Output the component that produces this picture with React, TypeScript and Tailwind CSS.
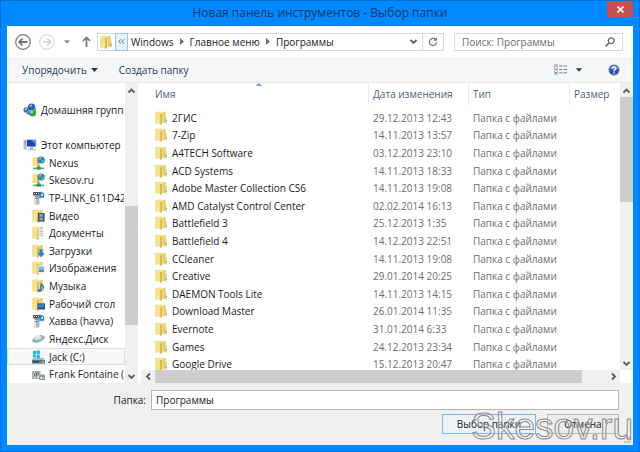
import React from "react";

type Place = { label: string; icon: React.ReactNode; level: number; active?: boolean };

const FolderIcon = ({ children }: { children?: React.ReactNode }) => (
  <svg className="h-[14px] w-[13px] shrink-0" viewBox="0 0 13 14">
    <path d="M0.5 1L6 0.3V12.4H0.5Z" fill="#f5e491" />
    <path d="M0.5 1L2 0.8V12.4H0.5Z" fill="#efdc90" />
    <path d="M5.6 1.2L11 0.6V12L5.6 12.6Z" fill="#f7ea9e" />
    <path d="M7.6 1.6L10.4 1.2V11L7.6 12.2Z" fill="#e6cf6e" />
    <path d="M3.6 2.2L6 3.2V13.7L3.6 12.6Z" fill="#f3e08a" />
    <path d="M5.4 3L6.8 2.4V13.3L5.4 13.8Z" fill="#cda93a" />
    <path d="M10.2 5L11.6 5.6V12.4L10.2 12.6Z" fill="#e3ce85" />
    <path d="M10.6 9h1.1v2h-1.1z" fill="#7fae9c" />
    {children}
  </svg>
);

const HomeGroupIcon = () => (
  <svg className="h-[14px] w-[14px] shrink-0" viewBox="0 0 14 14">
    <circle cx="8.5" cy="4" r="3.6" fill="#2c56c4" />
    <circle cx="7.8" cy="2.8" r="1.4" fill="#8fb4f2" />
    <circle cx="3.2" cy="7" r="2.7" fill="#3a72b0" />
    <circle cx="2.8" cy="6.2" r="1.1" fill="#a6d0ee" />
    <circle cx="9.6" cy="9.8" r="3.6" fill="#3f9e45" />
    <circle cx="8.8" cy="8.8" r="1.5" fill="#9fdc98" />
    <circle cx="5.4" cy="10.2" r="1.6" fill="#4a7fd0" />
    <circle cx="12" cy="5.8" r="1.3" fill="#5f8fdc" />
  </svg>
);

const ComputerIcon = () => (
  <svg className="h-[14px] w-[14px] shrink-0" viewBox="0 0 14 14">
    <rect x="0.5" y="2" width="3" height="9.5" fill="#b9c0c6" />
    <path d="M1 4h2M1 6h2" stroke="#7c868e" strokeWidth="0.8" />
    <rect x="3" y="1" width="10.5" height="8.4" fill="#c9d2dc" />
    <rect x="4" y="2" width="8.5" height="6.4" fill="#1c3fc0" />
    <path d="M8 2H12.5V6Z" fill="#5d92ee" />
    <path d="M7 9.4h3v1.6H7z" fill="#9aa3aa" />
    <path d="M4.5 11h8.5v1.5H4.5z" fill="#bfc6cb" />
  </svg>
);

const NetworkFolderIcon = () => (
  <svg className="h-[14px] w-[13px] shrink-0" viewBox="0 0 13 14">
    <path d="M0.5 1.5L6.4 0.8V10H0.5Z" fill="#f3df84" />
    <path d="M5 2L7.5 1.4V9.6L5 10Z" fill="#d9bc54" />
    <circle cx="9.2" cy="4" r="3.6" fill="#2d7fc2" />
    <path d="M7 2.6C8 0.8 9.6 1 9.6 2.2S8 4.2 7.2 4.4ZM9.6 4.2L12 3.6C12 5.8 10.6 7 9.6 6.8Z" fill="#5fc474" />
    <path d="M8.2 1.3l1.3 .2-.8 1z" fill="#d4ecfa" />
    <path d="M6 9.4h1.6v2H6z" fill="#33a06c" />
    <path d="M1 11.6h11v1.6H1z" fill="#45b07e" />
    <path d="M4.6 10.6h4.2v3h-4.2z" fill="#2f9866" />
  </svg>
);

const MediaServerIcon = () => (
  <svg className="h-[14px] w-[13px] shrink-0" viewBox="0 0 13 14">
    <rect x="2" y="1.5" width="5.5" height="12" rx="1" fill="#b3b8bb" />
    <rect x="2" y="1.5" width="2" height="12" rx="1" fill="#dfe2e4" />
    <path d="M2.8 5.5h3.8M2.8 7.5h3.8" stroke="#6d7478" strokeWidth="0.8" />
    <rect x="1" y="1" width="8" height="3.4" fill="#4b555c" />
    <path d="M2 2h1v1H2zM4 2h1v1H4zM6 2h1v1H6z" fill="#dfe8ee" />
    <path d="M9 6V1.4l2.6 1.2v3" fill="none" stroke="#2a86c8" strokeWidth="1.2" />
    <circle cx="8.4" cy="6" r="1.3" fill="#2a86c8" />
    <circle cx="11" cy="5.8" r="1.2" fill="#2a86c8" />
  </svg>
);

const PlanetIcon = () => (
  <svg className="h-[14px] w-[13px] shrink-0" viewBox="0 0 13 14">
    <ellipse cx="6.5" cy="7" rx="6" ry="2.8" transform="rotate(-20 6.5 7)" fill="#bccfd4" stroke="#7f9ba3" strokeWidth="0.8" />
    <circle cx="6" cy="6" r="3" fill="#d6e3e6" />
    <path d="M1 8.8C4 9.6 9.6 8 12 4.8" fill="none" stroke="#6c8a93" strokeWidth="0.9" />
    <path d="M4.5 5.2C5 4 6.5 3.8 7.4 4.4" fill="none" stroke="#fff" strokeWidth="0.8" />
  </svg>
);

const SystemDriveIcon = () => (
  <svg className="h-[14px] w-[13px] shrink-0" viewBox="0 0 13 14">
    <path d="M1 1h3v3H1zM4.6 0.6h3.2V4H4.6zM1 4.6h3v3H1zM4.6 4.6h3.2V8H4.6z" fill="#18b4f0" />
    <path d="M1.5 8H11.5L13 10H0Z" fill="#aab5ba" />
    <path d="M0 10h13v3.6H0z" fill="#657a84" />
    <path d="M1 11h6v1.4H1z" fill="#2f4149" />
    <path d="M10 11h2v1.4h-2z" fill="#5ddc6c" />
  </svg>
);

const SharedDriveIcon = () => (
  <svg className="h-[14px] w-[13px] shrink-0" viewBox="0 0 13 14">
    <path d="M0 4h8.4v8H0z" fill="#a9b2ac" />
    <path d="M1 5h6.4v5.4H1z" fill="#e8ece8" />
    <path d="M1.4 5.4l2.4 4.4M3.8 5.4L1.4 9.8M4.6 9.8V5.6h2v2.2h-2" fill="none" stroke="#4c5a50" strokeWidth="0.9" />
    <path d="M8 7.4h4L13 9v4H7V9z" fill="#8f9b92" />
    <path d="M7.8 10h4.2v1.8H7.8z" fill="#dbe4dc" />
    <path d="M10.6 10.4h1.4v1.2h-1.4z" fill="#48b65a" />
  </svg>
);

const places: Place[] = [
  { label: "Этот компьютер", icon: <ComputerIcon />, level: 0 },
  { label: "Nexus", icon: <NetworkFolderIcon />, level: 1 },
  { label: "Skesov.ru", icon: <NetworkFolderIcon />, level: 1 },
  { label: "TP-LINK_611D42:1", icon: <MediaServerIcon />, level: 1 },
  {
    label: "Видео",
    level: 1,
    icon: (
      <FolderIcon>
        <path d="M6 4h6.5v8.6H6z" fill="#3c4a55" />
        <path d="M7.4 4.8h3.6v3H7.4zM7.4 8.6h3.6v3H7.4z" fill="#7fa9c6" />
      </FolderIcon>
    ),
  },
  {
    label: "Документы",
    level: 1,
    icon: (
      <FolderIcon>
        <path d="M6.4 3.4h5.6v9H6.4z" fill="#eef4f8" />
        <path d="M7.4 5.4h3.6M7.4 7.4h3.6M7.4 9.4h3.6" stroke="#93b1c6" strokeWidth="0.8" />
      </FolderIcon>
    ),
  },
  {
    label: "Загрузки",
    level: 1,
    icon: (
      <FolderIcon>
        <path d="M7.4 5h3v4h2.2L9 13.4 5.2 9h2.2z" fill="#2f86cc" />
      </FolderIcon>
    ),
  },
  {
    label: "Изображения",
    level: 1,
    icon: (
      <FolderIcon>
        <path d="M5.8 4.4h7v7.6h-7z" fill="#eef4f8" />
        <path d="M6.6 5.6h5.4v3H6.6z" fill="#7fbbe4" />
        <path d="M6.6 8.6h5.4v2.4H6.6z" fill="#5c8c9c" />
      </FolderIcon>
    ),
  },
  {
    label: "Музыка",
    level: 1,
    icon: (
      <FolderIcon>
        <path d="M9 11V4.4c.4 2 3 2 2.6 5" fill="none" stroke="#2a7fc4" strokeWidth="1.5" />
        <ellipse cx="7.8" cy="11.4" rx="2" ry="1.6" fill="#2a7fc4" />
      </FolderIcon>
    ),
  },
  {
    label: "Рабочий стол",
    level: 1,
    icon: (
      <FolderIcon>
        <path d="M5.4 6.4H13v6H5.4z" fill="#27466f" />
        <path d="M6.2 7.2h6v3.4h-6z" fill="#3f7fc0" />
      </FolderIcon>
    ),
  },
  { label: "Хавва (havva)", icon: <MediaServerIcon />, level: 1 },
  { label: "Яндекс.Диск", icon: <PlanetIcon />, level: 1 },
  { label: "Jack (C:)", icon: <SystemDriveIcon />, level: 1, active: true },
  { label: "Frank Fontaine (D:)", icon: <SharedDriveIcon />, level: 1 },
];

const folders = [
  ["2ГИС", "29.12.2013 12:43"],
  ["7-Zip", "14.11.2013 13:57"],
  ["A4TECH Software", "03.12.2013 23:10"],
  ["ACD Systems", "14.11.2013 18:33"],
  ["Adobe Master Collection CS6", "14.11.2013 19:08"],
  ["AMD Catalyst Control Center", "02.02.2014 16:13"],
  ["Battlefield 3", "25.12.2013 1:35"],
  ["Battlefield 4", "14.12.2013 22:51"],
  ["CCleaner", "14.11.2013 19:08"],
  ["Creative", "29.01.2014 20:25"],
  ["DAEMON Tools Lite", "14.11.2013 14:15"],
  ["Download Master", "26.01.2014 11:35"],
  ["Evernote", "31.01.2014 6:33"],
  ["Games", "24.12.2013 23:34"],
  ["Google Drive", "15.12.2013 20:47"],
];

const chevrons = {
  up: "M1.5 6.5L4.5 3.5L7.5 6.5",
  down: "M1.5 3L4.5 6L7.5 3",
  left: "M6 1.5L3 4.5L6 7.5",
  right: "M3 1.5L6 4.5L3 7.5",
};

const Chevron = ({ to }: { to: keyof typeof chevrons }) => (
  <svg className="h-[9px] w-[9px]" viewBox="0 0 9 9">
    <path d={chevrons[to]} fill="none" stroke="#5c5c5c" strokeWidth="1.8" />
  </svg>
);

const Caret = ({ className }: { className: string }) => (
  <svg className={className} viewBox="0 0 7 4">
    <path d="M0 0H7L3.5 4Z" fill="currentColor" />
  </svg>
);

const CrumbArrow = () => (
  <svg className="h-[7px] w-1 shrink-0" viewBox="0 0 4 7">
    <path d="M0 0L4 3.5L0 7Z" fill="#6d6d6d" />
  </svg>
);

type ScrollBarProps = { horizontal?: boolean; before: number; thumb: number; after: number };

const ScrollBar = ({ horizontal, before, thumb, after }: ScrollBarProps) => (
  <div
    className={
      horizontal
        ? "flex h-[13px] w-full bg-[#f0f0f0]"
        : "flex w-[13px] shrink-0 flex-col bg-[#f0f0f0]"
    }
  >
    <button
      aria-label="Назад"
      className={`flex shrink-0 items-center justify-center ${horizontal ? "w-[14px]" : "h-[14px]"}`}
    >
      <Chevron to={horizontal ? "left" : "up"} />
    </button>
    <div style={{ flexGrow: before }} />
    <div className="bg-[#cdcdcd]" style={{ flexGrow: thumb }} />
    <div style={{ flexGrow: after }} />
    <button
      aria-label="Вперёд"
      className={`flex shrink-0 items-center justify-center ${horizontal ? "w-[14px]" : "h-[14px]"}`}
    >
      <Chevron to={horizontal ? "right" : "down"} />
    </button>
  </div>
);

const TitleBar = () => (
  <header className="grid h-[25px] shrink-0 grid-cols-[1fr_auto_1fr]">
    <h1 className="col-start-2 text-[12px] leading-6 text-[#123a66]">
      Новая панель инструментов - Выбор папки
    </h1>
    <button
      aria-label="Закрыть"
      className="flex h-4 w-[26px] items-center justify-center justify-self-end bg-[#c75050]"
    >
      <svg className="h-[7px] w-[7px]" viewBox="0 0 7 7">
        <path d="M0.5 0.5L6.5 6.5M6.5 0.5L0.5 6.5" stroke="#fff" strokeWidth="1.6" />
      </svg>
    </button>
  </header>
);

const AddressBar = () => (
  <div className="flex h-[31px] shrink-0 items-center pr-[10px] pl-2">
    <button aria-label="Назад">
      <svg className="h-4 w-4" viewBox="0 0 16 16" fill="none" stroke="#777">
        <circle cx="8" cy="8" r="7.3" strokeWidth="1.2" />
        <path d="M12.4 8H4.4M7.6 4.6L4.2 8L7.6 11.4" strokeWidth="1.9" />
      </svg>
    </button>
    <button aria-label="Вперёд" className="ml-2">
      <svg className="h-4 w-4" viewBox="0 0 16 16" fill="none" stroke="#d0d0d0">
        <circle cx="8" cy="8" r="7.3" strokeWidth="1" />
        <path d="M3.6 8H11.6M8.4 4.6L11.8 8L8.4 11.4" strokeWidth="1.6" />
      </svg>
    </button>
    <button aria-label="Последние папки" className="ml-[5px] p-1 text-[#8b8b8b]">
      <Caret className="h-1 w-[6px]" />
    </button>
    <button aria-label="Вверх" className="ml-2">
      <svg className="h-[11px] w-[9px]" viewBox="0 0 9 11" fill="none" stroke="#777">
        <path d="M4.5 11V1.6M1 5L4.5 1.4L8 5" strokeWidth="1.7" />
      </svg>
    </button>

    <div className="ml-[6px] flex h-[18px] min-w-0 flex-1 items-center border border-[#d9d9d9] pl-[2px]">
      <FolderIcon />
      <button className="ml-[2px] flex h-[18px] w-[13px] shrink-0 items-center justify-center border border-[#90c8e8] bg-[#e5f3fb]">
        <svg className="h-[5px] w-[7px]" viewBox="0 0 7 5" fill="none" stroke="#555">
          <path d="M3 0.3L0.8 2.5L3 4.7M6.2 0.3L4 2.5L6.2 4.7" strokeWidth="0.9" />
        </svg>
      </button>
      <button className="mr-[6px] ml-[3px]">Windows</button>
      <CrumbArrow />
      <button className="mx-[6px]">Главное меню</button>
      <CrumbArrow />
      <button className="mx-[6px]">Программы</button>
      <button aria-label="Предыдущие расположения" className="mr-[2px] ml-auto">
        <Chevron to="down" />
      </button>
      <button
        aria-label="Обновить"
        className="ml-[2px] flex h-4 w-[21px] items-center justify-center border-l border-[#d9d9d9]"
      >
        <svg className="h-[10px] w-[10px]" viewBox="0 0 10 10">
          <path d="M7.6 2.4A3.6 3.6 0 1 0 8.6 5.4" fill="none" stroke="#808080" strokeWidth="1.4" />
          <path d="M5.2 3.8H9V0Z" fill="#808080" />
        </svg>
      </button>
    </div>

    <label className="ml-[10px] flex h-[18px] w-[169px] shrink-0 items-center border border-[#d9d9d9] px-[7px]">
      <input
        aria-label="Поиск"
        placeholder="Поиск: Программы"
        className="w-full min-w-0 outline-none placeholder:text-[#6d6d6d]"
      />
      <svg className="h-[10px] w-[10px] shrink-0" viewBox="0 0 10 10" fill="none" stroke="#6c6c6c">
        <circle cx="6.2" cy="3.7" r="2.9" strokeWidth="1.3" />
        <path d="M4 6L0.6 9.4" strokeWidth="1.7" />
      </svg>
    </label>
  </div>
);

const Toolbar = () => (
  <div className="flex h-[26px] shrink-0 items-center border-b border-[#e4e7ea] bg-[#f5f6f7] pr-[13px] pl-[15px] text-[#1e395b]">
    <button className="flex items-center gap-1">
      Упорядочить
      <Caret className="h-1 w-[7px]" />
    </button>
    <button className="ml-[21px]">Создать папку</button>
    <button aria-label="Вид" className="ml-auto flex items-center gap-[9px]">
      <svg className="h-[11px] w-[13px]" viewBox="0 0 13 11">
        <path d="M0.5 0.5h3v10h-3z" fill="#f4f6f8" stroke="#a2abb5" strokeWidth="0.7" />
        <path d="M1.2 1.4h1.6v1.4H1.2z" fill="#5878a0" />
        <path d="M1.2 4.6h1.6v1.6H1.2z" fill="#e06a5c" />
        <path d="M1.2 8h1.6v1.6H1.2z" fill="#5878a0" />
        <path d="M5 2h3.4M9.4 2H13M5 5.4h3.4M9.4 5.4H13M5 8.8h3.4M9.4 8.8H13" stroke="#6c7c90" />
      </svg>
      <Caret className="h-1 w-[6px]" />
    </button>
    <button aria-label="Справка" className="ml-[26px]">
      <svg className="h-3 w-3" viewBox="0 0 12 12">
        <circle cx="6" cy="6" r="5.8" fill="#a3abbd" />
        <circle cx="6" cy="6" r="4.8" fill="#2a50b8" />
        <path d="M2 4.6C3 1.4 9 1.4 10 4.6C8 6 4 6 2 4.6Z" fill="#6f93e4" />
        <path d="M4.2 4.6C4.2 2.4 7.9 2.4 7.9 4.5C7.9 5.9 6 5.8 6 7.4M6 8.3V9.6" fill="none" stroke="#fff" strokeWidth="1.3" />
      </svg>
    </button>
  </div>
);

const PlaceRow = ({ place }: { place: Place }) => (
  <li className="min-h-0 flex-1">
    <button
      className={`flex h-full w-full items-center gap-1 overflow-hidden border text-left whitespace-nowrap ${
        place.level ? "pl-6" : "pl-[15px]"
      } ${place.active ? "border-[#dedede] bg-[#f7f7f7]" : "border-transparent"}`}
    >
      {place.icon}
      {place.label}
    </button>
  </li>
);

const Sidebar = () => (
  <nav className="flex w-[131px] shrink-0">
    <ul className="flex min-w-0 flex-1 flex-col overflow-hidden pt-[18px]">
      <PlaceRow place={{ label: "Домашняя группа", icon: <HomeGroupIcon />, level: 0 }} />
      <li className="flex-1" />
      {places.map((place) => (
        <PlaceRow key={place.label} place={place} />
      ))}
    </ul>
    <ScrollBar before={109} thumb={118} after={44} />
  </nav>
);

const FileList = () => (
  <div className="ml-[3px] flex min-w-0 flex-1 flex-col">
    <div className="flex min-h-0 flex-1">
      <div className="min-w-0 flex-1 overflow-hidden">
        <table className="h-[290px] w-full table-fixed border-collapse text-left whitespace-nowrap">
          <colgroup>
            <col />
            <col className="w-[100px]" />
            <col className="w-[101px]" />
            <col className="w-[51px]" />
          </colgroup>
          <thead className="text-[#4c607a]">
            <tr className="h-[26px] align-top leading-[22px]">
              <th className="relative pl-[14px] font-normal">
                Имя
                <svg className="absolute top-0 left-[115px] h-[3px] w-[6px]" viewBox="0 0 6 3">
                  <path d="M3 0L6 3H0Z" fill="#5f9cbd" />
                </svg>
              </th>
              {["Дата изменения", "Тип", "Размер"].map((title) => (
                <th key={title} className="p-0 font-normal">
                  <div className="border-l border-[#e2ecf5] pl-1">{title}</div>
                </th>
              ))}
            </tr>
          </thead>
          <tbody className="text-[#6d6d6d]">
            {folders.map(([name, date]) => (
              <tr key={name}>
                <td className="p-0 pl-[14px] text-[#1a1a1a]">
                  <div className="flex items-center gap-1">
                    <FolderIcon />
                    {name}
                  </div>
                </td>
                <td className="p-0 pl-[5px]">{date}</td>
                <td className="p-0 pl-[5px]">Папка с файлами</td>
                <td />
              </tr>
            ))}
          </tbody>
        </table>
      </div>
      <ScrollBar before={0} thumb={105} after={153} />
    </div>
    <div className="flex pr-[13px]">
      <ScrollBar horizontal before={0} thumb={426} after={24} />
    </div>
  </div>
);

const Footer = () => (
  <footer className="shrink-0 bg-[#f0f0f0] pt-[7px] pr-[14px] pb-[11px]">
    <div className="flex items-center">
      <label htmlFor="folder" className="w-[139px] text-right">
        Папка:
      </label>
      <input
        id="folder"
        defaultValue="Программы"
        className="ml-[5px] h-5 min-w-0 flex-1 border border-[#b4b4b4] bg-white px-1 outline-none"
      />
    </div>
    <div className="mt-1 flex justify-end gap-[11px]">
      <button className="h-5 w-[94px] border border-[#7eb4ea] bg-[#ecf2f8]">Выбор папки</button>
      <button className="h-5 w-[72px] border border-[#b8b8b8] bg-[#ececec]">Отмена</button>
    </div>
  </footer>
);

const App = () => {
  return (
    <div className="flex h-screen flex-col border border-[#0071d4] bg-[#0088ff] px-[6px] pb-[6px] font-['Open_Sans','Noto_Sans',sans-serif] text-[10px] leading-4 text-[#1a1a1a]">
      <TitleBar />
      <main className="relative flex min-h-0 flex-1 flex-col bg-white">
        <AddressBar />
        <Toolbar />
        <div className="flex min-h-0 flex-1">
          <Sidebar />
          <FileList />
        </div>
        <Footer />
        <svg className="absolute right-[2px] bottom-[2px] h-[7px] w-[7px]" viewBox="0 0 7 7">
          <path d="M5 0h2v2H5zM2.5 2.5h2v2h-2zM5 2.5h2v2H5zM0 5h2v2H0zM2.5 5h2v2h-2zM5 5h2v2H5z" fill="#c4c4c4" />
        </svg>
        <div className="pointer-events-none absolute right-0 bottom-0 font-['Liberation_Sans',Arial,sans-serif] text-[37px] leading-9 text-white/20 [-webkit-text-stroke:1px_#8c8c8c]">
          Skesov.ru
        </div>
      </main>
    </div>
  );
};

export default App;
